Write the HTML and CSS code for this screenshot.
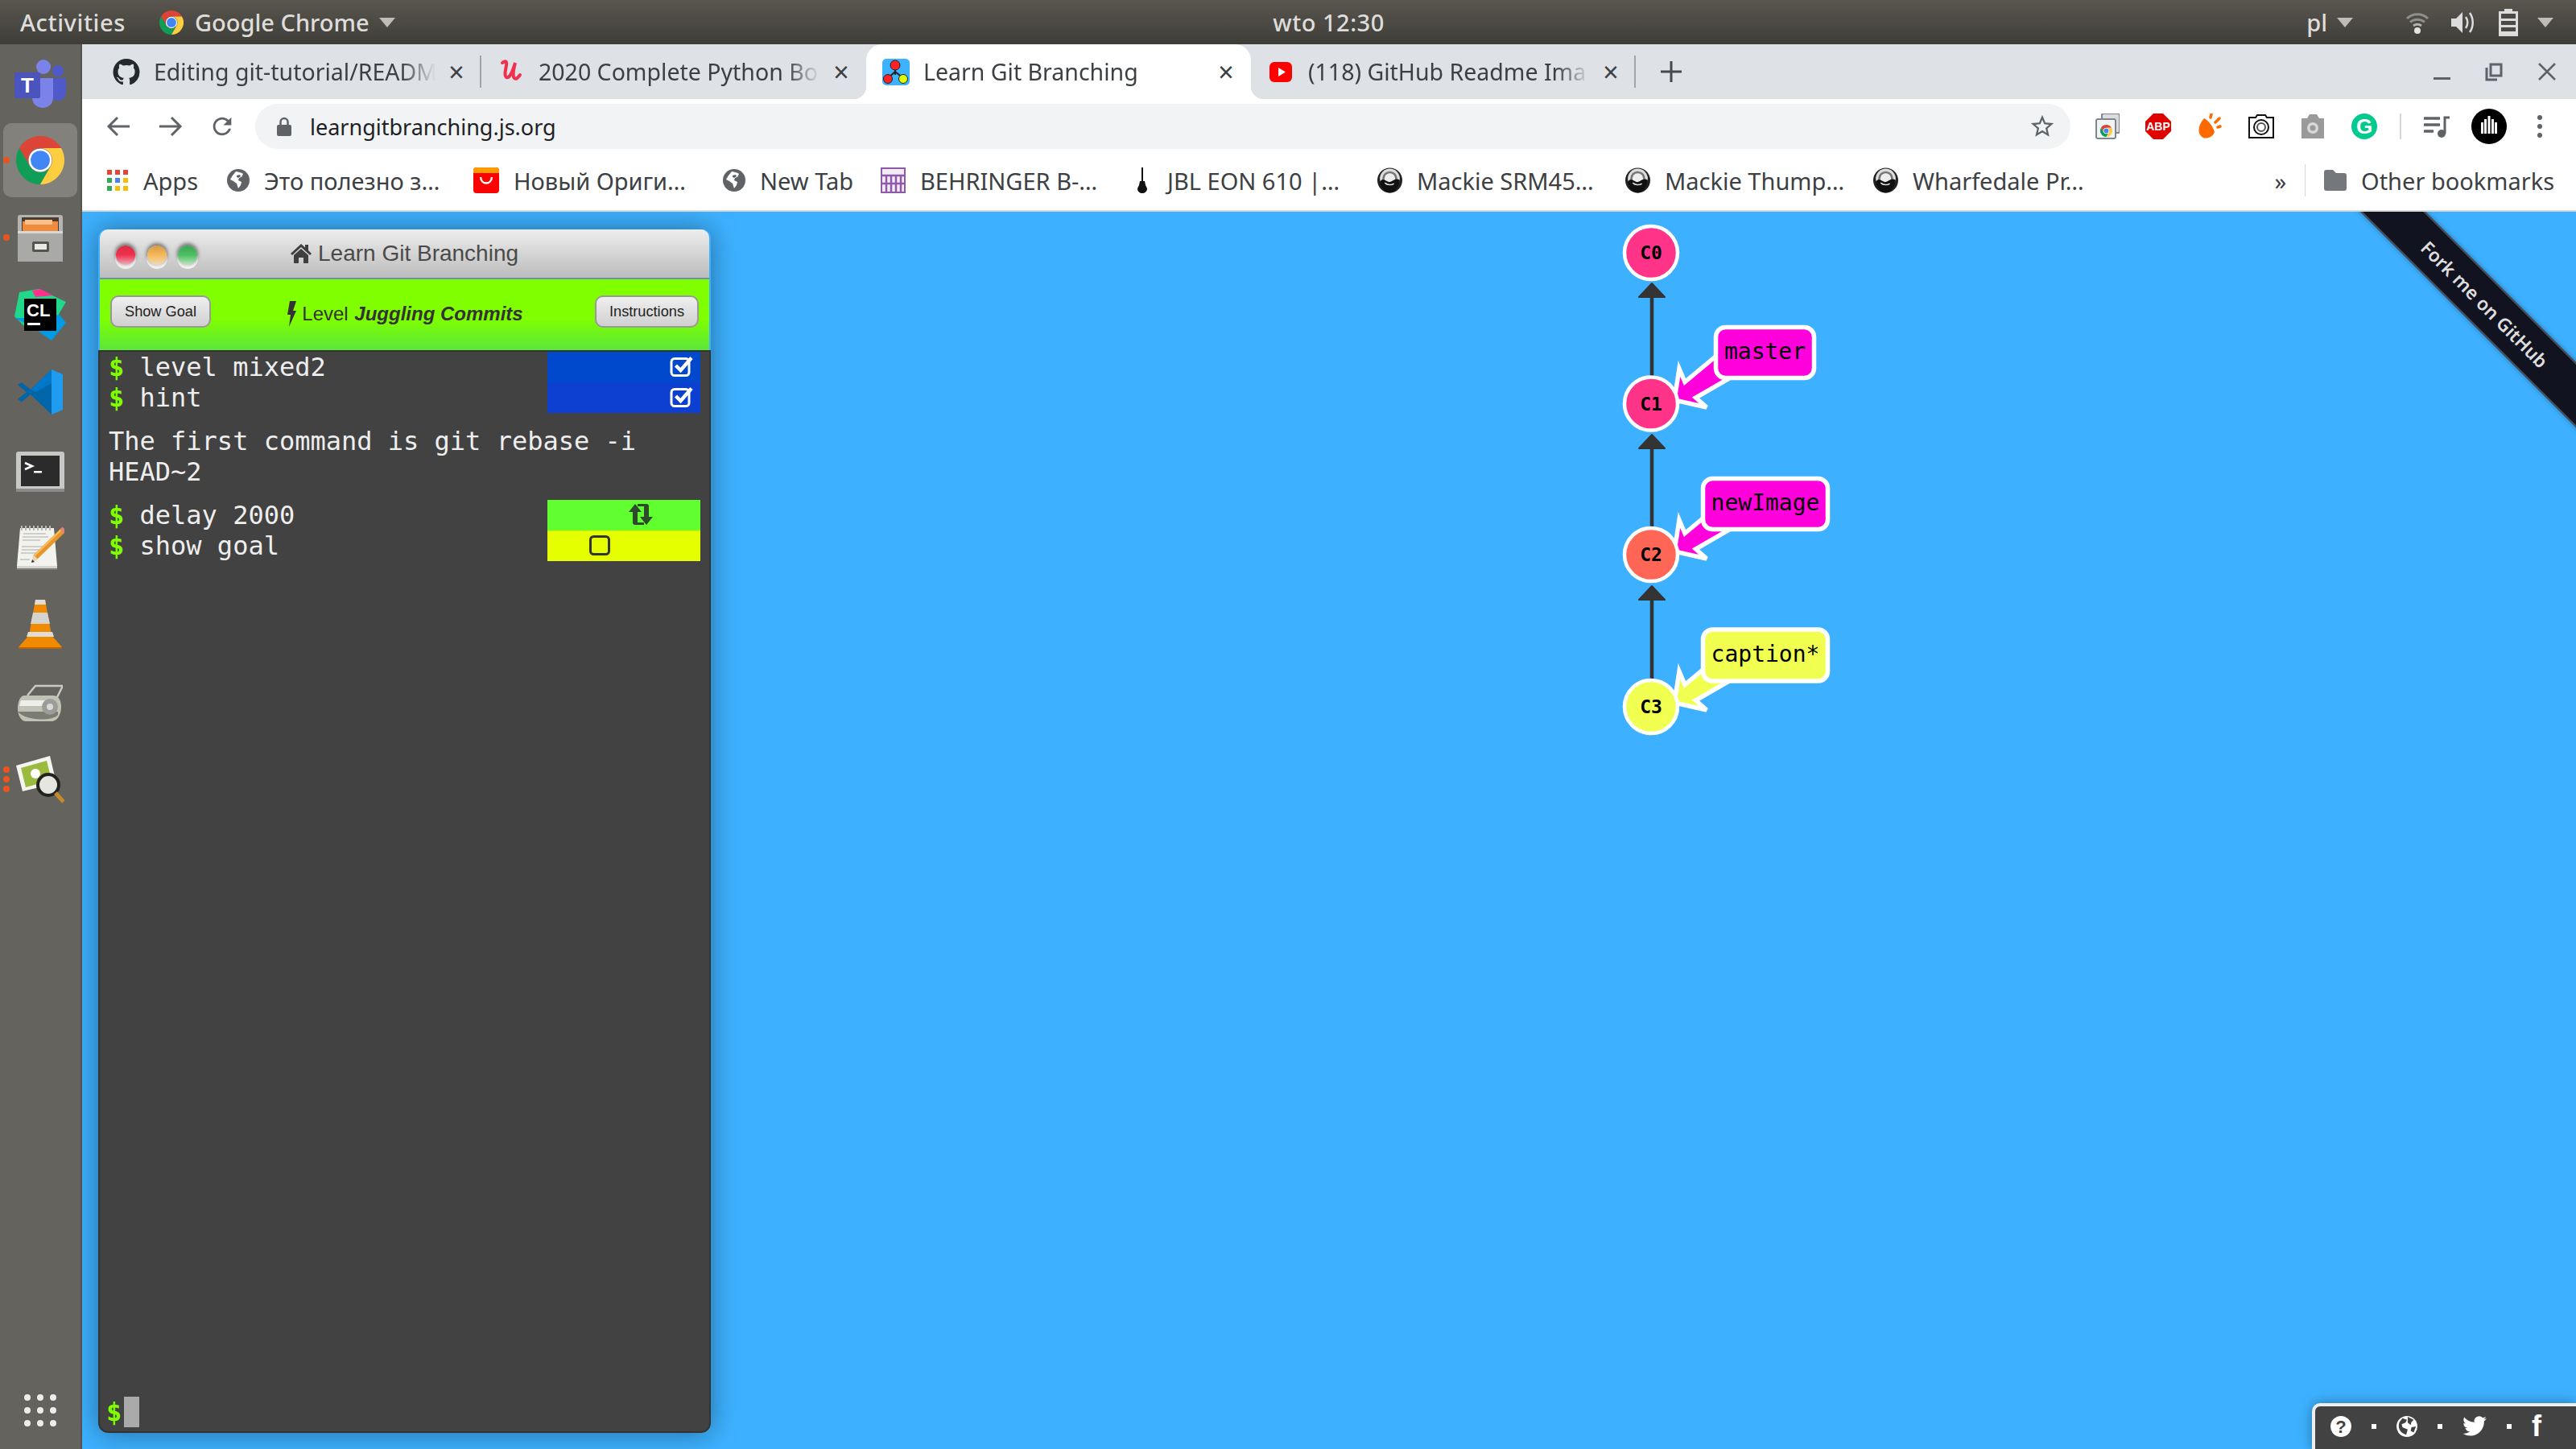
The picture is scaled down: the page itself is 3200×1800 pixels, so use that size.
FILE: index.html
```html
<!DOCTYPE html>
<html lang="en">

<head>
    <meta charset="UTF-8">
    <title>Learn Git Branching</title>
    <link rel="stylesheet" href="styles.css">
</head>

<body>
    <svg class="defs" width="0" height="0">
        <defs>
            <symbol id="chrome" viewBox="0 0 48 48">
                <path fill="#db4437" d="M24 0A24 24 0 0 0 3.2 12L13.6 30A12 12 0 0 1 24 12H44.8A24 24 0 0 0 24 0z" />
                <path fill="#0f9d58" transform="rotate(-120 24 24)" d="M24 0A24 24 0 0 0 3.2 12L13.6 30A12 12 0 0 1 24 12H44.8A24 24 0 0 0 24 0z" />
                <path fill="#ffcd40" transform="rotate(120 24 24)" d="M24 0A24 24 0 0 0 3.2 12L13.6 30A12 12 0 0 1 24 12H44.8A24 24 0 0 0 24 0z" />
                <circle cx="24" cy="24" r="11.5" fill="#fff" />
                <circle cx="24" cy="24" r="9.5" fill="#4285f4" />
            </symbol>
            <symbol id="globe" viewBox="0 0 28 28">
                <circle cx="14" cy="14" r="14" fill="#5f6368" />
                <path fill="#fff" d="M11 3c3 1 7 1 9 3l-2 4-3 1-1 3 4 2-1 4-3 4-2-6-4-3-4-2 3-5z" />
                <path fill="#5f6368" d="M12 8l4-1 1 2-3 2-2-1z" />
            </symbol>
            <symbol id="mackie" viewBox="0 0 30 30">
                <circle cx="15" cy="15" r="15" fill="#222" />
                <circle cx="15" cy="13" r="12" fill="#ddd" />
                <circle cx="15" cy="13" r="9" fill="#777" />
                <circle cx="15" cy="13" r="6.5" fill="#eee" />
                <path fill="#111" d="M3 17c4-7 8 1 12 0s7-6 12-2c-1 9-7 15-12 15S4 25 3 17z" />
                <path fill="none" stroke="#ddd" stroke-width="1.5" d="M9 18c3 3 8 3 11 1" />
            </symbol>
            <symbol id="checked" viewBox="0 0 30 26">
                <rect x="2" y="3.5" width="22" height="21" rx="4" fill="none" stroke="#fff" stroke-width="3" />
                <path fill="none" stroke="#fff" stroke-width="4.5" d="M7.5 12l6 6L27 2.5" />
            </symbol>
        </defs>
    </svg>

    <header class="topbar">
        <div class="topbar-left">
            <span class="activities">Activities</span>
            <svg class="app-icon" width="30" height="30"><use href="#chrome" /></svg>
            <span class="app-name">Google Chrome</span>
            <i class="caret"></i>
        </div>
        <div class="clock">wto 12:30</div>
        <div class="topbar-right">
            <span class="lang">pl</span>
            <i class="caret"></i>
            <svg class="tray-wifi" width="30" height="30" viewBox="0 0 30 30">
                <path fill="none" stroke="#8f8e8a" stroke-width="3" d="M2 10c7-7 19-7 26 0M6 14.5c5-4.5 13-4.5 18 0" />
                <path fill="none" stroke="#b5b4b0" stroke-width="3" d="M10 19c3-2 7-2 10 0" />
                <circle cx="15" cy="25" r="4" fill="#e4e4e4" />
            </svg>
            <svg class="tray-vol" width="30" height="30" viewBox="0 0 30 30">
                <path fill="#dcdcdc" d="M1 10h6l8-8v26l-8-8H1z" />
                <path fill="none" stroke="#dcdcdc" stroke-width="2.5" d="M19 8c3 4 3 10 0 14M24 3c5 7 5 17 0 24" />
            </svg>
            <svg class="tray-bat" width="24" height="34" viewBox="0 0 24 34">
                <path fill="#dcdcdc" d="M7 0h10v3h7v31H0V3h7z" />
                <path fill="#4b4a44" d="M3 6h18v6H3zM3 15h18v5H3zM3 23h18v5H3z" />
            </svg>
            <i class="caret"></i>
        </div>
    </header>

    <div class="desktop">
        <nav class="dock">
            <div class="dock-item teams">
                <svg width="64" height="60" viewBox="0 0 64 60">
                    <circle cx="36" cy="9" r="9" fill="#7b83eb" />
                    <circle cx="54" cy="14" r="7" fill="#5059c9" />
                    <path fill="#5059c9" d="M44 23h20v18c0 6-5 10-10 10s-10-4-10-10z" />
                    <path fill="#7b83eb" d="M22 23h26v24c0 8-6 13-13 13s-13-5-13-13z" />
                    <rect y="16" width="32" height="32" rx="2" fill="#4b53bc" />
                    <text class="teams-t" x="16" y="41">T</text>
                </svg>
            </div>
            <div class="dock-item chrome-tile">
                <i class="run-dot"></i>
                <svg width="60" height="60"><use href="#chrome" /></svg>
            </div>
            <div class="dock-item files">
                <i class="run-dot"></i>
                <svg width="56" height="60" viewBox="0 0 56 60">
                    <rect y="2" width="56" height="58" rx="3" fill="#b4b4b2" />
                    <rect x="5" y="5" width="46" height="18" fill="#4a3b2e" />
                    <rect x="6" y="10" width="44" height="13" fill="#f08a3c" />
                    <rect x="9" y="8" width="34" height="6" fill="#f7c08a" />
                    <rect y="23" width="56" height="37" fill="#a9a9a7" />
                    <rect y="22" width="56" height="3" fill="#d8d8d6" />
                    <rect x="18" y="35" width="21" height="13" rx="2" fill="#55544f" />
                    <rect x="21" y="38" width="15" height="7" fill="#e9e9e7" />
                </svg>
            </div>
            <div class="dock-item clion">
                <svg width="64" height="64" viewBox="0 0 64 64">
                    <path fill="#21d789" d="M6 4L30 0 64 16 50 40 12 46 0 34z" />
                    <path fill="#ff318c" d="M22 2l10-2 16 8-22 2z" />
                    <path fill="#009ae5" d="M0 36l20 10 26 18 18-22-8-10-36 4z" />
                    <rect x="12" y="12" width="40" height="40" fill="#000" />
                    <text class="clion-t" x="15" y="34">CL</text>
                    <rect x="16" y="42" width="16" height="3" fill="#fff" />
                </svg>
            </div>
            <div class="dock-item code">
                <svg width="56" height="56" viewBox="0 0 56 56">
                    <path fill="#0065a9" d="M42 0L16 25 5 16 0 19l11 9-11 9 5 3 11-9 26 25z" />
                    <path fill="#007acc" d="M42 0v17L22 28 16 25z" opacity=".9" />
                    <path fill="#1f9cf0" d="M42 0l14 6v44l-14 6z" />
                </svg>
            </div>
            <div class="dock-item term">
                <svg width="60" height="50" viewBox="0 0 60 50">
                    <rect width="60" height="50" rx="3" fill="#c8c8c6" />
                    <rect x="6" y="5" width="48" height="38" fill="#2b2b2b" />
                    <path fill="none" stroke="#fff" stroke-width="2.5" d="M11 14l9 4-9 4" />
                    <rect x="22" y="24" width="10" height="2.5" fill="#fff" />
                    <rect y="46" width="60" height="4" fill="#8b8b89" />
                </svg>
            </div>
            <div class="dock-item notes">
                <svg width="60" height="60" viewBox="0 0 60 60">
                    <path fill="#7d7b76" d="M1 54h50v5H1z" />
                    <path fill="#f2f2ee" d="M5 7h42l4 47H1z" />
                    <path fill="#d4d4d0" d="M1 54h50v3H1z" />
                    <path stroke="#b9b9b5" stroke-width="2" d="M7 4v6M12 4v6M17 4v6M22 4v6M27 4v6M32 4v6M37 4v6M42 4v6" />
                    <path stroke="#c2c2be" stroke-width="1.5" d="M9 14h28M8 18h32M8 22h22M7 30h30M7 34h22M6 38h20M5 46h12" />
                    <path stroke="#e8952a" stroke-width="7" d="M58 10L24 43" />
                    <path stroke="#f7c063" stroke-width="2" d="M57 8L23 41" />
                    <path stroke="#e0837f" stroke-width="7" d="M60 8l-3 3" />
                    <path fill="#e9d5b0" d="M27 46l-6-6-1 9z" />
                    <path fill="#333" d="M20 46l3 3-4 1z" />
                </svg>
            </div>
            <div class="dock-item vlc">
                <svg width="54" height="61" viewBox="0 0 54 61">
                    <path fill="#f08a00" d="M21 0h12l8 44 13 15H0l13-15z" />
                    <path fill="#d5d3ce" d="M18 16h18l3 14H15z" />
                    <path fill="#e0ddd8" d="M21 0h12l1 6H20zM12 40h30l2 6H10z" />
                    <path fill="#b96400" d="M0 59h54v2H0z" />
                </svg>
            </div>
            <div class="dock-item scanner">
                <svg width="56" height="46" viewBox="0 0 56 46">
                    <path fill="none" stroke="#c9c9c7" stroke-width="2.5" d="M12 14L22 2h34l-9 18" />
                    <path fill="#c1c2b6" d="M8 14h36c5 0 10 4 10 14s-5 18-12 18H10C4 46 0 38 0 30s3-16 8-16z" />
                    <path fill="#eeeeea" d="M4 20h38v7H2z" />
                    <path fill="#7c7d72" d="M0 34h50v4c-6 8-40 8-50-4z" />
                    <circle cx="40" cy="28" r="10" fill="#9c9c98" />
                    <circle cx="40" cy="28" r="4" fill="#d9d9d7" />
                </svg>
            </div>
            <div class="dock-item viewer">
                <i class="run-dot"></i>
                <i class="run-dot"></i>
                <i class="run-dot"></i>
                <svg width="60" height="60" viewBox="0 0 60 60">
                    <path fill="#f4f4f0" d="M0 12L42 0l8 34-42 10z" />
                    <path fill="#9bbb3f" d="M6 15l32-9 6 24-32 9z" />
                    <circle cx="24" cy="22" r="6" fill="#fff" />
                    <circle cx="40" cy="36" r="13" fill="#e6e6e0" stroke="#222" stroke-width="4" />
                    <path stroke="#c58a2d" stroke-width="5" d="M49 46l10 11" />
                </svg>
            </div>
            <div class="dock-grid">
                <i></i><i></i><i></i><i></i><i></i><i></i><i></i><i></i><i></i>
            </div>
        </nav>

        <main class="browser">
            <div class="tabstrip">
                <div class="tab">
                    <svg class="favicon" width="34" height="33" viewBox="0 0 16 16">
                        <path fill="#24292e" d="M8 0C3.58 0 0 3.58 0 8c0 3.54 2.29 6.53 5.47 7.59.4.07.55-.17.55-.38 0-.19-.01-.82-.01-1.49-2.01.37-2.53-.49-2.69-.94-.09-.23-.48-.94-.82-1.13-.28-.15-.68-.52-.01-.53.63-.01 1.08.58 1.23.82.72 1.21 1.87.87 2.33.66.07-.52.28-.87.51-1.07-1.78-.2-3.64-.89-3.64-3.95 0-.87.31-1.59.82-2.15-.08-.2-.36-1.02.08-2.12 0 0 .67-.21 2.2.82.64-.18 1.32-.27 2-.27.68 0 1.36.09 2 .27 1.53-1.04 2.2-.82 2.2-.82.44 1.1.16 1.92.08 2.12.51.56.82 1.27.82 2.15 0 3.07-1.87 3.75-3.65 3.95.29.25.54.73.54 1.48 0 1.07-.01 1.93-.01 2.2 0 .21.15.46.55.38A8.013 8.013 0 0016 8c0-4.42-3.58-8-8-8z" />
                    </svg>
                    <span class="tab-title">Editing git-tutorial/READM</span>
                    <span class="tab-close">×</span>
                </div>
                <i class="tab-sep"></i>
                <div class="tab">
                    <svg class="favicon" width="34" height="33" viewBox="0 0 34 33">
                        <path fill="none" stroke="#f0304f" stroke-width="4" stroke-linecap="round" d="M6 5c4-3 6-2 5 3-1 7-3 13 0 15 4 2 8-8 11-18-2 8-4 16-1 19 2 2 4 0 7-4" />
                    </svg>
                    <span class="tab-title">2020 Complete Python Bo</span>
                    <span class="tab-close">×</span>
                </div>
                <div class="tab tab-active">
                    <svg class="favicon" width="34" height="33" viewBox="0 0 34 33">
                        <rect width="34" height="33" rx="5" fill="#3eb1ff" />
                        <path stroke="#222" stroke-width="2" fill="none" d="M16 12v8M16 16L7 24M16 16l10 8" />
                        <circle cx="16" cy="8" r="6" fill="#f22" stroke="#222" />
                        <circle cx="7" cy="25" r="5.5" fill="#f22" stroke="#222" />
                        <circle cx="26" cy="25" r="5.5" fill="#df0" stroke="#222" />
                    </svg>
                    <span class="tab-title">Learn Git Branching</span>
                    <span class="tab-close">×</span>
                </div>
                <div class="tab">
                    <svg class="favicon" width="34" height="33" viewBox="0 0 34 33">
                        <rect x="3" y="4" width="28" height="25" rx="6" fill="#f00" />
                        <path fill="#fff" d="M14 11l9 5.5-9 5.5z" />
                    </svg>
                    <span class="tab-title">(118) GitHub Readme Ima</span>
                    <span class="tab-close">×</span>
                </div>
                <i class="tab-sep"></i>
                <svg class="tab-new" width="26" height="26" viewBox="0 0 26 26">
                    <path fill="#45484c" d="M11.5 0h3v11.5H26v3H14.5V26h-3V14.5H0v-3h11.5z" />
                </svg>
                <div class="win-controls">
                    <svg width="24" height="24" viewBox="0 0 24 24"><rect x="3" y="19" width="21" height="3" fill="#5f6368" /></svg>
                    <svg width="24" height="24" viewBox="0 0 24 24">
                        <path fill="none" stroke="#5f6368" stroke-width="3" d="M8 3h13v14H8zM3 7v15h13" />
                    </svg>
                    <svg width="24" height="24" viewBox="0 0 24 24">
                        <path stroke="#5f6368" stroke-width="2.5" d="M2 2l20 20M22 2L2 22" />
                    </svg>
                </div>
            </div>

            <div class="toolbar">
                <svg class="nav-back" width="30" height="26" viewBox="0 0 30 26">
                    <path fill="none" stroke="#5f6368" stroke-width="3" d="M29 13H3M14 2L3 13l11 11" />
                </svg>
                <svg class="nav-fwd" width="30" height="26" viewBox="0 0 30 26">
                    <path fill="none" stroke="#5f6368" stroke-width="3" d="M1 13h26M16 2l11 11-11 11" />
                </svg>
                <svg class="nav-reload" width="34" height="34" viewBox="0 0 24 24">
                    <path fill="#5f6368" d="M17.65 6.35C16.2 4.9 14.21 4 12 4c-4.42 0-7.99 3.58-7.99 8s3.57 8 7.99 8c3.73 0 6.84-2.55 7.73-6h-2.08c-.82 2.33-3.04 4-5.65 4-3.31 0-6-2.69-6-6s2.69-6 6-6c1.66 0 3.14.69 4.22 1.78L13 11h7V4l-2.35 2.35z" />
                </svg>
                <div class="omnibox">
                    <svg class="lock" width="18" height="24" viewBox="0 0 18 24">
                        <path fill="none" stroke="#5f6368" stroke-width="2.5" d="M4.5 11V6.5a4.5 4.5 0 0 1 9 0V11" />
                        <rect y="10" width="18" height="14" rx="2" fill="#5f6368" />
                    </svg>
                    <span class="url">learngitbranching.js.org</span>
                    <svg class="star" width="34" height="34" viewBox="0 0 24 24">
                        <path fill="#5f6368" d="M22 9.24l-7.19-.62L12 2 9.19 8.63 2 9.24l5.46 4.73L5.82 21 12 17.27 18.18 21l-1.63-7.03L22 9.24zM12 15.4l-3.76 2.27 1-4.28-3.32-2.88 4.38-.38L12 6.1l1.71 4.04 4.38.38-3.32 2.88 1 4.28L12 15.4z" />
                    </svg>
                </div>
                <div class="extensions">
                    <svg width="30" height="32" viewBox="0 0 30 32">
                        <rect x="8" y="0" width="22" height="24" rx="2" fill="#dadce0" stroke="#80868b" stroke-width="2" />
                        <rect x="1" y="7" width="24" height="24" rx="2" fill="#f1f3f4" stroke="#80868b" stroke-width="2" />
                        <svg x="6" y="14" width="15" height="15"><use href="#chrome" /></svg>
                    </svg>
                    <svg width="32" height="32" viewBox="0 0 32 32">
                        <path fill="#e00000" d="M10 0h12l10 10v12L22 32H10L0 22V10z" />
                        <text class="abp-t" x="16" y="21">ABP</text>
                    </svg>
                    <svg width="32" height="32" viewBox="0 0 32 32">
                        <path fill="#ff6a00" d="M9 6c5 2 11 10 13 17-2 6-9 9-14 7C1 27 0 16 9 6z" />
                        <path stroke="#ff6a00" stroke-width="3.5" stroke-linecap="round" d="M17 5l1-4M23 11l5-5M26 17l3-1" />
                    </svg>
                    <svg width="32" height="32" viewBox="0 0 32 32">
                        <path fill="#fff" stroke="#111" stroke-width="2" d="M1 5h8l2-3h10l2 3h8v25H1z" />
                        <circle cx="16" cy="17" r="9" fill="none" stroke="#111" stroke-width="2" />
                        <circle cx="16" cy="17" r="5" fill="none" stroke="#555" stroke-width="2" />
                    </svg>
                    <svg width="32" height="32" viewBox="0 0 32 32">
                        <path fill="#9a9a9a" d="M2 6h7l3-5h9l3 5h6v25H2z" />
                        <circle cx="16" cy="18" r="7" fill="#d8d8d8" />
                        <circle cx="16" cy="18" r="3.5" fill="#9a9a9a" />
                    </svg>
                    <svg width="32" height="32" viewBox="0 0 32 32">
                        <circle cx="16" cy="16" r="16" fill="#00ca8e" />
                        <text class="gram-t" x="16" y="25">G</text>
                    </svg>
                    <i class="ext-sep"></i>
                    <svg class="media-btn" width="32" height="28" viewBox="0 0 32 28">
                        <path stroke="#5f6368" stroke-width="3.5" d="M0 4h20M0 12h20M0 20h12" />
                        <path fill="none" stroke="#5f6368" stroke-width="3" d="M26 23V3h6" />
                        <circle cx="22" cy="23" r="5" fill="#5f6368" />
                    </svg>
                    <svg class="avatar" width="44" height="44" viewBox="0 0 44 44">
                        <circle cx="22" cy="22" r="22" fill="#000" />
                        <path fill="#fff" d="M12 17h3v14h-3zM16 13h3v18h-3zM20.5 9h3v22h-3zM25 13h3v18h-3zM29 17h3v14h-3z" />
                    </svg>
                    <svg class="menu-dots" width="8" height="30" viewBox="0 0 8 30">
                        <circle cx="4" cy="4" r="3" fill="#5f6368" />
                        <circle cx="4" cy="15" r="3" fill="#5f6368" />
                        <circle cx="4" cy="26" r="3" fill="#5f6368" />
                    </svg>
                </div>
            </div>

            <div class="bookmarks">
                <div class="bookmark">
                    <svg class="bm-icon" width="27" height="27" viewBox="0 0 27 27">
                        <path fill="#ea4335" d="M0 0h6v6H0zM10 0h6v6h-6zM20 0h6v6h-6z" />
                        <path fill="#4285f4" d="M10 10h6v6h-6z" />
                        <path fill="#fbbc05" d="M20 10h6v6h-6zM10 20h6v6h-6zM20 20h6v6h-6z" />
                        <path fill="#34a853" d="M0 10h6v6H0zM0 20h6v6H0z" />
                    </svg>
                    <span>Apps</span>
                </div>
                <div class="bookmark">
                    <svg class="bm-icon" width="28" height="28"><use href="#globe" /></svg>
                    <span>Это полезно з…</span>
                </div>
                <div class="bookmark">
                    <svg class="bm-icon" width="32" height="32" viewBox="0 0 32 32">
                        <rect width="32" height="32" rx="4" fill="#f00" />
                        <path fill="#ff9a00" d="M0 4a4 4 0 0 1 4-4h24a4 4 0 0 1 4 4v3H0z" />
                        <path fill="none" stroke="#fff" stroke-width="2.5" d="M9 12c1 10 13 10 14 0" />
                    </svg>
                    <span>Новый Ориги…</span>
                </div>
                <div class="bookmark">
                    <svg class="bm-icon" width="28" height="28"><use href="#globe" /></svg>
                    <span>New Tab</span>
                </div>
                <div class="bookmark">
                    <svg class="bm-icon" width="31" height="32" viewBox="0 0 31 32">
                        <rect x="1" y="1" width="29" height="30" fill="#f3ecf7" stroke="#8e5aa8" stroke-width="2" />
                        <path stroke="#8e5aa8" stroke-width="2.5" d="M7 10v21M13 10v21M19 10v21M25 10v21M1 10h29M1 20h29" />
                    </svg>
                    <span>BEHRINGER B-…</span>
                </div>
                <div class="bookmark bm-narrow">
                    <svg class="bm-icon" width="12" height="32" viewBox="0 0 12 32">
                        <rect x="5" width="2" height="18" fill="#111" />
                        <path fill="#111" d="M3 17h6l1 5 2 4c0 4-3 6-6 6s-6-2-6-6l2-4z" />
                    </svg>
                    <span>JBL EON 610 |…</span>
                </div>
                <div class="bookmark">
                    <svg class="bm-icon" width="31" height="32"><use href="#mackie" /></svg>
                    <span>Mackie SRM45…</span>
                </div>
                <div class="bookmark">
                    <svg class="bm-icon" width="31" height="32"><use href="#mackie" /></svg>
                    <span>Mackie Thump…</span>
                </div>
                <div class="bookmark">
                    <svg class="bm-icon" width="31" height="32"><use href="#mackie" /></svg>
                    <span>Wharfedale Pr…</span>
                </div>
                <span class="bm-more">»</span>
                <i class="bm-sep"></i>
                <div class="bm-other">
                    <svg width="28" height="26" viewBox="0 0 28 26">
                        <path fill="#74787c" d="M3 0h8l4 4h10a3 3 0 0 1 3 3v16a3 3 0 0 1-3 3H3a3 3 0 0 1-3-3V3a3 3 0 0 1 3-3z" />
                    </svg>
                    <span>Other bookmarks</span>
                </div>
            </div>

            <section class="page">
                <div class="window">
                    <div class="window-title">
                        <div class="lights">
                            <i class="light light-red"></i>
                            <i class="light light-amber"></i>
                            <i class="light light-green"></i>
                        </div>
                        <svg class="home-icon" width="26" height="24" viewBox="0 0 26 24">
                            <path fill="#3f3f3f" d="M13 0l5 4.5V1h4v7l4 4-2 2L13 4 2 14l-2-2zM4 14l9-8 9 8v10h-6v-7h-6v7H4z" />
                        </svg>
                        <span>Learn Git Branching</span>
                    </div>
                    <div class="level-bar">
                        <button class="level-btn">Show Goal</button>
                        <div class="level-name">
                            <svg width="11" height="32" viewBox="0 0 11 32">
                                <path fill="#333" d="M3 0h8L7 12h4L2 32l2-15H0z" />
                            </svg>
                            <span>Level <b>Juggling Commits</b></span>
                        </div>
                        <button class="level-btn">Instructions</button>
                    </div>
                    <div class="terminal">
                        <div class="log">
                            <div class="cmd">
                                <span class="cmd-text"><b>$</b> level mixed2</span>
                                <span class="status status-blue-a">
                                    <svg width="30" height="26"><use href="#checked" /></svg>
                                </span>
                            </div>
                            <div class="cmd">
                                <span class="cmd-text"><b>$</b> hint</span>
                                <span class="status status-blue-b">
                                    <svg width="30" height="26"><use href="#checked" /></svg>
                                </span>
                            </div>
                            <p class="response">The first command is git rebase -i HEAD~2</p>
                            <div class="cmd">
                                <span class="cmd-text"><b>$</b> delay 2000</span>
                                <span class="status status-green">
                                    <svg width="30" height="26" viewBox="0 0 30 26">
                                        <path fill="#2d4a2a" d="M8 0l8 10h-5v13h8v3H8a3 3 0 0 1-3-3V10H0z" />
                                        <path fill="#2d4a2a" d="M22 26l-8-10h5V3h-8V0h11a3 3 0 0 1 3 3v13h5z" />
                                    </svg>
                                </span>
                            </div>
                            <div class="cmd">
                                <span class="cmd-text"><b>$</b> show goal</span>
                                <span class="status status-yellow">
                                    <svg width="26" height="25" viewBox="0 0 26 25">
                                        <rect x="1.5" y="1.5" width="23" height="22" rx="4" fill="none" stroke="#333" stroke-width="3" />
                                    </svg>
                                </span>
                            </div>
                        </div>
                        <div class="input-line"><b>$</b><i class="cursor"></i></div>
                    </div>
                </div>

                <svg class="graph" width="400" height="700" viewBox="1950 263 400 700">
                    <g class="edges">
                        <path d="M2052 368V470M2052 556V658M2052 744V846" />
                        <path class="head" d="M2052 352l16 17h-32zM2052 540l16 17h-32zM2052 728l16 17h-32z" />
                    </g>
                    <g class="pointer pointer-pink">
                        <path d="M2080 497L2086 458 2093 474.5 2131 443 2150 469 2106.5 494 2120 506z" />
                        <rect x="2131.5" y="406.5" width="122" height="63" rx="12" />
                        <text x="2192.5" y="446">master</text>
                    </g>
                    <g class="pointer pointer-pink">
                        <path d="M2080 685L2086 646 2093 662.5 2131 631 2150 657 2106.5 682 2120 694z" />
                        <rect x="2115.5" y="594.5" width="155" height="63" rx="12" />
                        <text x="2193" y="634">newImage</text>
                    </g>
                    <g class="pointer pointer-yellow">
                        <path d="M2080 873L2086 834 2093 850.5 2131 819 2150 845 2106.5 870 2120 882z" />
                        <rect x="2115.5" y="782" width="155" height="64" rx="12" />
                        <text x="2193" y="822">caption*</text>
                    </g>
                    <g class="commit commit-pink">
                        <circle cx="2051" cy="314" r="33" />
                        <text x="2051" y="322">C0</text>
                    </g>
                    <g class="commit commit-pink">
                        <circle cx="2051" cy="501.5" r="33" />
                        <text x="2051" y="509.5">C1</text>
                    </g>
                    <g class="commit commit-red">
                        <circle cx="2051" cy="689" r="33" />
                        <text x="2051" y="697">C2</text>
                    </g>
                    <g class="commit commit-yellow">
                        <circle cx="2051" cy="878" r="33" />
                        <text x="2051" y="886">C3</text>
                    </g>
                </svg>

                <div class="ribbon"><span>Fork me on GitHub</span></div>

                <div class="links">
                    <svg width="26" height="26" viewBox="0 0 26 26">
                        <circle cx="13" cy="13" r="13" fill="#fff" />
                        <text class="help-t" x="13" y="21">?</text>
                    </svg>
                    <i class="link-dot"></i>
                    <svg width="26" height="26" viewBox="0 0 28 28">
                        <circle cx="14" cy="14" r="14" fill="#fff" />
                        <path fill="#424242" d="M8 3l6 2-2 4-5 2 1 4 7 3-2 7C5 23 1 16 4 8zM15 1l8 4-3 3-1 4-4-3zM20 15l6-1-3 8-4-2z" />
                    </svg>
                    <i class="link-dot"></i>
                    <svg width="30" height="26" viewBox="0 0 24 21">
                        <path fill="#fff" d="M23.95 2.57a10 10 0 0 1-2.82.78 4.96 4.96 0 0 0 2.16-2.73c-.95.56-2 .96-3.13 1.19a4.92 4.92 0 0 0-8.38 4.48C7.69 6.1 4.07 4.13 1.64 1.16a4.82 4.82 0 0 0-.67 2.48c0 1.71.87 3.21 2.19 4.09a4.9 4.9 0 0 1-2.23-.61v.06a4.92 4.92 0 0 0 3.95 4.82 5 5 0 0 1-2.21.09 4.94 4.94 0 0 0 4.6 3.42A9.87 9.87 0 0 1 0 17.61 14 14 0 0 0 7.56 19.82c9.05 0 14-7.5 14-13.99 0-.21 0-.42-.02-.63a9.94 9.94 0 0 0 2.46-2.63z" />
                    </svg>
                    <i class="link-dot"></i>
                    <span class="fb">f</span>
                </div>
            </section>
        </main>
    </div>
</body>

</html>
```

FILE: styles.css
```css
* {
    box-sizing: border-box;
}

html,
body {
    margin: 0;
    width: 3200px;
    height: 1800px;
    overflow: hidden;
}

body {
    font-family: "Noto Sans", sans-serif;
    display: flex;
    flex-direction: column;
}

i {
    display: block;
}

.defs {
    position: absolute;
}

/* ubuntu top bar */
.topbar {
    height: 55px;
    flex: none;
    display: grid;
    grid-template-columns: 1fr auto 1fr;
    align-items: center;
    background: linear-gradient(#59564f, #3e3d37);
    color: #dedddb;
    font-size: 29px;
    font-weight: 500;
    padding: 0 28px 0 25px;
}

.topbar-left,
.topbar-right {
    display: flex;
    align-items: center;
}

.topbar-right {
    justify-content: flex-end;
}

.activities {
    margin-right: 42px;
    letter-spacing: 0.6px;
}

.app-name {
    margin-left: 14px;
    margin-right: 12px;
}

.clock {
    padding-left: 104px;
    letter-spacing: 0.5px;
}

.caret {
    width: 0;
    height: 0;
    border-left: 10px solid transparent;
    border-right: 10px solid transparent;
    border-top: 12px solid #bdbcb9;
}

.lang {
    margin-right: 12px;
}

.tray-wifi {
    margin-left: 65px;
}

.tray-vol {
    margin-left: 26px;
}

.tray-bat {
    margin-left: 30px;
    margin-right: 24px;
}

/* dock + browser */
.desktop {
    flex: 1;
    display: flex;
    min-height: 0;
}

.dock {
    width: 102px;
    flex: none;
    background: #65635d;
    border-right: 2px solid #55534e;
    display: flex;
    flex-direction: column;
    align-items: center;
    position: relative;
}

.dock-item {
    display: flex;
    justify-content: center;
    align-items: center;
    width: 92px;
    position: relative;
}

.dock-item svg {
    display: block;
}

.teams {
    margin-top: 19px;
}

.chrome-tile {
    height: 92px;
    margin-top: 19px;
    background: #83817b;
    border-radius: 10px;
}

.files {
    margin-top: 20px;
}

.clion {
    margin-top: 34px;
}

.code {
    margin-top: 36px;
}

.term {
    margin-top: 46px;
}

.notes {
    margin-top: 38px;
}

.vlc {
    margin-top: 36px;
}

.scanner {
    margin-top: 44px;
}

.viewer {
    margin-top: 43px;
}

.run-dot {
    position: absolute;
    left: 0;
    width: 8px;
    height: 8px;
    border-radius: 50%;
    background: #e95420;
    top: calc(50% - 4px);
}

.viewer .run-dot:nth-child(1) {
    top: 13px;
}

.viewer .run-dot:nth-child(2) {
    top: 25px;
}

.viewer .run-dot:nth-child(3) {
    top: 37px;
}

.dock-grid {
    margin-top: auto;
    margin-bottom: 28px;
    display: grid;
    grid-template-columns: repeat(3, 8px);
    gap: 8px;
}

.dock-grid i {
    width: 8px;
    height: 8px;
    border-radius: 50%;
    background: #eee;
}

.browser {
    flex: 1;
    min-width: 0;
    display: flex;
    flex-direction: column;
    color: #3c4043;
}

/* tabs */
.tabstrip {
    height: 68px;
    flex: none;
    background: #dee1e6;
    display: flex;
    align-items: center;
    padding-left: 18px;
}

.tab {
    width: 478px;
    height: 68px;
    flex: none;
    display: flex;
    align-items: center;
    padding-left: 20px;
    font-size: 28.5px;
    position: relative;
}

.favicon {
    flex: none;
    margin-right: 17px;
}

.tab-title {
    flex: none;
    width: 350px;
    white-space: nowrap;
    overflow: hidden;
    -webkit-mask-image: linear-gradient(to right, #000 88%, transparent);
    mask-image: linear-gradient(to right, #000 88%, transparent);
}

.tab-close {
    margin-left: 14px;
    font-size: 34px;
    line-height: 1;
    width: 24px;
    text-align: center;
}

.tab-active {
    background: #fff;
    border-radius: 20px 20px 0 0;
}

.tab-active::before,
.tab-active::after {
    content: "";
    position: absolute;
    bottom: 0;
    width: 16px;
    height: 16px;
}

.tab-active::before {
    left: -16px;
    background: radial-gradient(circle at 0 0, transparent 16px, #fff 16.5px);
}

.tab-active::after {
    right: -16px;
    background: radial-gradient(circle at 100% 0, transparent 16px, #fff 16.5px);
}

.tab-sep {
    width: 2px;
    height: 40px;
    flex: none;
    margin-left: -2px;
    background: #a2a4a8;
}

.tab-new {
    margin-left: 31px;
}

.win-controls {
    margin-left: auto;
    margin-right: 24px;
    display: flex;
    gap: 42px;
    align-items: center;
}

/* toolbar */
.toolbar {
    height: 68px;
    flex: none;
    background: #fff;
    display: flex;
    align-items: center;
    padding: 0 0 0 30px;
}

.nav-back {
    margin-right: 35px;
}

.nav-fwd {
    margin-right: 32px;
}

.nav-reload {
    margin-right: 24px;
}

.omnibox {
    width: 2255px;
    height: 56px;
    border-radius: 28px;
    background: #f1f3f4;
    display: flex;
    align-items: center;
    padding: 0 18px 0 27px;
    font-size: 27px;
    color: #202124;
}

.url {
    margin-left: 23px;
}

.star {
    margin-left: auto;
}

.extensions {
    display: flex;
    align-items: center;
    margin-left: 31px;
    gap: 32px;
}

.ext-sep {
    width: 2px;
    height: 32px;
    background: #d5d6d8;
    margin: 0 -4px;
}

.media-btn {
    margin-right: -1px;
}

.avatar {
    margin: 0 -4px;
}

.menu-dots {
    margin-left: 9px;
}

/* bookmarks */
.bookmarks {
    height: 72px;
    flex: none;
    background: #fff;
    border-bottom: 2px solid #d9d9d9;
    padding: 0 30px 4px 31px;
    display: flex;
    align-items: center;
    font-size: 29px;
}

.bookmark {
    display: flex;
    align-items: center;
    flex: none;
    gap: 18px;
    white-space: nowrap;
}

.bookmark:nth-child(1) {
    width: 149px;
}

.bookmark:nth-child(2) {
    width: 306px;
}

.bookmark:nth-child(3) {
    width: 310px;
}

.bookmark:nth-child(4) {
    width: 196px;
}

.bookmark:nth-child(5) {
    width: 319px;
}

.bookmark:nth-child(6) {
    width: 298px;
}

.bookmark:nth-child(7),
.bookmark:nth-child(8) {
    width: 308px;
}

.bookmark:nth-child(9) {
    width: 490px;
}

.bm-narrow {
    gap: 25px;
}

.bm-more {
    width: 30px;
    text-align: center;
    margin-left: 1px;
    flex: none;
}

.bm-sep {
    width: 1px;
    height: 40px;
    flex: none;
    margin-left: 15px;
    background: #d5d6d8;
}

.bm-other {
    display: flex;
    align-items: center;
    margin-left: 23px;
    gap: 18px;
    white-space: nowrap;
}

/* the learngitbranching page */
.page {
    flex: 1;
    min-height: 0;
    position: relative;
    overflow: hidden;
    background: #3db1ff;
    padding: 22px 0 20px 20px;
}

.window {
    width: 761px;
    height: 100%;
    display: flex;
    flex-direction: column;
    border-radius: 10px;
    box-shadow: 0 0 34px rgba(0, 0, 0, 0.4);
}

.window-title {
    height: 62px;
    flex: none;
    margin: 0 2px;
    display: flex;
    align-items: center;
    padding-left: 237px;
    border-radius: 10px 10px 0 0;
    border-bottom: 2px solid #6e8fb0;
    background: linear-gradient(#eeeded, #bcbcbc);
    font-family: "Liberation Sans", sans-serif;
    font-size: 28px;
    color: #4a4a4a;
    position: relative;
}

.home-icon {
    margin-right: 8px;
}

.lights {
    position: absolute;
    left: 20px;
    top: 20px;
    display: flex;
    gap: 14.5px;
}

.light {
    width: 24px;
    height: 24px;
    border-radius: 50%;
    box-shadow: 0 -2px 4px 1px #777, 0 4px 0 1px #f2f2f2;
}

.light-red {
    background: linear-gradient(#d92a44, #f0324f 50%, #eeb0bc);
}

.light-amber {
    background: linear-gradient(#d99a45, #f6b95a 50%, #f0dcb8);
}

.light-green {
    background: linear-gradient(#3ca555, #4cc062 50%, #bfe5c2);
}

.level-bar {
    height: 88px;
    flex: none;
    margin: 0 2px;
    display: flex;
    justify-content: space-between;
    padding: 20px 13px 0 13px;
    background: linear-gradient(#7fff00 55%, #5ce63a);
    font-family: "Liberation Sans", sans-serif;
}

.level-btn {
    height: 40px;
    padding: 0 16px;
    border: 2px solid #999;
    border-radius: 10px;
    background: linear-gradient(#efefef, #d0d0d0);
    font-family: "Liberation Sans", sans-serif;
    font-size: 18.2px;
    color: #222;
}

.level-name {
    display: flex;
    align-items: center;
    gap: 7px;
    height: 46px;
    font-size: 24px;
    color: #333;
    margin-left: 6px;
}

.level-name b {
    font-style: italic;
    margin-left: 1px;
}

.terminal {
    flex: 1;
    min-height: 0;
    display: flex;
    flex-direction: column;
    border: 2px solid #333;
    border-radius: 0 0 12px 12px;
    background: #424242;
    font-family: "DejaVu Sans Mono", monospace;
    font-size: 32px;
    line-height: 38px;
    color: #eee;
}

.log {
    flex: 1;
    padding: 0 11px;
}

.log b,
.input-line b {
    color: #7fff00;
}

.cmd {
    display: flex;
    justify-content: space-between;
    height: 38px;
}

.status {
    width: 190px;
    flex: none;
    display: flex;
    align-items: center;
}

.status svg {
    margin-top: -2px;
}

.status-blue-a,
.status-blue-b {
    justify-content: flex-end;
    padding-right: 8px;
}

.status-blue-a {
    background: #0048cc;
}

.status-blue-b {
    background: #0d40d0;
}

.status-green {
    background: #62ff30;
    padding-left: 101px;
}

.status-yellow {
    background: #e6ff00;
    padding-left: 52px;
}

.response {
    margin: 16px 0;
    width: 735px;
}

.input-line {
    display: flex;
    align-items: center;
    padding: 0 0 5px 8px;
}

.cursor {
    width: 19px;
    height: 38px;
    margin-left: 3px;
    background: #aaa;
}

/* commit tree */
.graph {
    position: absolute;
    left: 1848px;
    top: 0;
}

.edges path {
    fill: none;
    stroke: #333;
    stroke-width: 4.5px;
}

.edges .head {
    fill: #333;
    stroke: #333;
    stroke-width: 2px;
    stroke-linejoin: round;
}

.pointer path,
.pointer rect {
    stroke: #fff;
    stroke-width: 5.5px;
}

.pointer text {
    font-family: "DejaVu Sans Mono", monospace;
    font-size: 28px;
    text-anchor: middle;
    fill: #000;
}

.pointer-pink path,
.pointer-pink rect {
    fill: #ff00dd;
}

.pointer-yellow path,
.pointer-yellow rect {
    fill: #f0ff50;
}

.commit circle {
    stroke: #fff;
    stroke-width: 4.5px;
}

.commit text {
    font-family: "DejaVu Sans Mono", monospace;
    font-weight: bold;
    font-size: 23px;
    text-anchor: middle;
    fill: #000;
}

.commit-pink circle {
    fill: #ff3388;
}

.commit-red circle {
    fill: #ff6655;
}

.commit-yellow circle {
    fill: #f0ff50;
}

.ribbon {
    position: absolute;
    left: 2685px;
    top: 85.5px;
    width: 600px;
    height: 57px;
    transform: rotate(45deg);
    background: #111320;
    border-top: 2px solid #4c4d57;
    border-bottom: 2px solid #4c4d57;
    box-shadow: 0 0 6px rgba(0, 0, 0, 0.4);
    display: flex;
    align-items: center;
    justify-content: center;
    font-size: 23px;
    font-weight: 600;
    color: #ddd;
}

.links {
    position: absolute;
    right: 0;
    bottom: 0;
    width: 328px;
    height: 57px;
    display: flex;
    align-items: center;
    padding: 0 0 4px 19px;
    border-top: 4px solid #eee;
    border-left: 4px solid #eee;
    border-radius: 10px 0 0 0;
    background: #424242;
    box-shadow: 0 0 16px rgba(0, 0, 0, 0.35);
}

.link-dot {
    width: 6px;
    height: 6px;
    margin: 0 25px;
    background: #fff;
}

.links svg {
    flex: none;
}

.fb {
    font-family: "Liberation Sans", sans-serif;
    font-weight: bold;
    font-size: 36px;
    color: #fff;
}

/* text inside small logos */
.teams-t {
    font-family: "Liberation Sans", sans-serif;
    font-weight: bold;
    font-size: 26px;
    fill: #fff;
    text-anchor: middle;
}

.clion-t {
    font-family: "Liberation Sans", sans-serif;
    font-weight: bold;
    font-size: 22px;
    fill: #fff;
}

.abp-t {
    font-family: "Liberation Sans", sans-serif;
    font-weight: bold;
    font-size: 14px;
    fill: #fff;
    text-anchor: middle;
}

.gram-t {
    font-family: "Liberation Sans", sans-serif;
    font-weight: bold;
    font-size: 26px;
    fill: #fff;
    text-anchor: middle;
}

.help-t {
    font-family: "Liberation Sans", sans-serif;
    font-weight: bold;
    font-size: 22px;
    fill: #424242;
    text-anchor: middle;
}
```
